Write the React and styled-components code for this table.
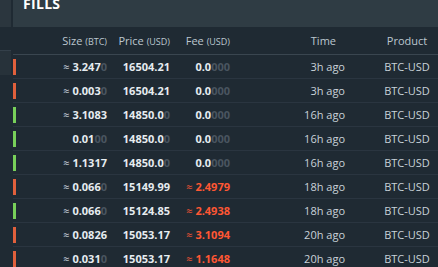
import React from "react";
import styled, { createGlobalStyle } from "styled-components";

const GlobalStyle = createGlobalStyle`
  html, body {
    margin: 0;
    padding: 0;
    background: #1f2a33;
    overflow: hidden;
  }
  body {
    font-family: "Open Sans", "Liberation Sans", sans-serif;
  }
`;

const Page = styled.div`
  display: flex;
  width: 438px;
  height: 267px;
  gap: 2px;
  background: #1f2a33;
  overflow: hidden;
`;

const Sidebar = styled.div`
  width: 11px;
  display: flex;
  flex-direction: column;
`;

const SideTop = styled.div`
  height: 27px;
  background: #2b363e;
`;

const SideBox = styled.div`
  margin-top: 23px;
  height: 24px;
  background: #27323a;
  border-top: 1px solid #34404a;
`;

const Panel = styled.div`
  flex: 1;
  display: flex;
  flex-direction: column;
  min-width: 0;
`;

const TitleBar = styled.div`
  flex-shrink: 0;
  height: 27px;
  background: #2f3c44;
  padding-left: 10px;
  overflow: hidden;
`;

const Title = styled.h2`
  margin: -3px 0 0;
  font-size: 14px;
  line-height: 14px;
  font-weight: 700;
  color: #ffffff;
  letter-spacing: 0.3px;
`;

const Row = styled.div`
  flex-shrink: 0;
  display: grid;
  grid-template-columns: 3px 91px 63px 60px 115px 93px;
  align-items: center;
  height: ${(p) => (p.$head ? "27px" : "23px")};
  border-bottom: 1px solid ${(p) => (p.$head ? "#3a4650" : "#2a3540")};
  font-size: 11px;
`;

const Bar = styled.span`
  width: 3px;
  height: 16px;
  background: ${(p) => (p.$side === "buy" ? "#78d05a" : "#e0603c")};
`;

const Cell = styled.div`
  text-align: ${(p) => p.$align || "right"};
  padding-right: ${(p) => p.$pr || 0}px;
  padding-left: ${(p) => p.$pl || 0}px;
  white-space: nowrap;
  color: ${(p) => (p.$head ? "#bcc7cf" : "#c9d2d9")};
`;

const Unit = styled.span`
  font-size: 9px;
`;

const Num = styled.span`
  font-weight: 700;
  color: ${(p) => (p.$red ? "#ff5733" : "#e6ecf0")};
`;

const Dim = styled.span`
  font-weight: 700;
  color: #4a5560;
`;

const Approx = styled.span`
  font-size: 11px;
  font-weight: 400;
  margin-right: 3px;
  color: ${(p) => (p.$red ? "#ff5733" : "#d4dce2")};
`;

const fills = [
  { side: "sell", size: ["3.247", "0"], approx: true, price: ["16504.21", ""], time: "3h ago" },
  { side: "sell", size: ["0.003", "0"], approx: true, price: ["16504.21", ""], time: "3h ago" },
  { side: "buy", size: ["3.1083", ""], approx: true, price: ["14850.0", "0"], time: "16h ago" },
  { side: "buy", size: ["0.01", "00"], approx: false, price: ["14850.0", "0"], time: "16h ago" },
  { side: "buy", size: ["1.1317", ""], approx: true, price: ["14850.0", "0"], time: "16h ago" },
  { side: "sell", size: ["0.066", "0"], approx: true, price: ["15149.99", ""], fee: "2.4979", time: "18h ago" },
  { side: "buy", size: ["0.066", "0"], approx: true, price: ["15124.85", ""], fee: "2.4938", time: "18h ago" },
  { side: "sell", size: ["0.0826", ""], approx: true, price: ["15053.17", ""], fee: "3.1094", time: "20h ago" },
  { side: "sell", size: ["0.031", "0"], approx: true, price: ["15053.17", ""], fee: "1.1648", time: "20h ago" },
];

function Fee({ value }) {
  if (value) {
    return (
      <>
        <Approx $red>≈</Approx>
        <Num $red>{value}</Num>
      </>
    );
  }
  return (
    <>
      <Num>0.0</Num>
      <Dim>000</Dim>
    </>
  );
}

export default function App() {
  return (
    <>
      <GlobalStyle />
      <Page>
        <Sidebar>
          <SideTop />
          <SideBox />
        </Sidebar>
        <Panel>
          <TitleBar>
            <Title>FILLS</Title>
          </TitleBar>
          <Row $head>
            <span />
            <Cell $head>Size <Unit>(BTC)</Unit></Cell>
            <Cell $head>Price <Unit>(USD)</Unit></Cell>
            <Cell $head>Fee <Unit>(USD)</Unit></Cell>
            <Cell $head $pr={9}>Time</Cell>
            <Cell $head $align="center" $pl={31}>Product</Cell>
          </Row>
          {fills.map((f, i) => (
            <Row key={i}>
              <Bar $side={f.side} />
              <Cell>
                {f.approx && <Approx>≈</Approx>}
                <Num>{f.size[0]}</Num>
                <Dim>{f.size[1]}</Dim>
              </Cell>
              <Cell>
                <Num>{f.price[0]}</Num>
                <Dim>{f.price[1]}</Dim>
              </Cell>
              <Cell>
                <Fee value={f.fee} />
              </Cell>
              <Cell>{f.time}</Cell>
              <Cell $align="center" $pl={31}>BTC-USD</Cell>
            </Row>
          ))}
        </Panel>
      </Page>
    </>
  );
}
